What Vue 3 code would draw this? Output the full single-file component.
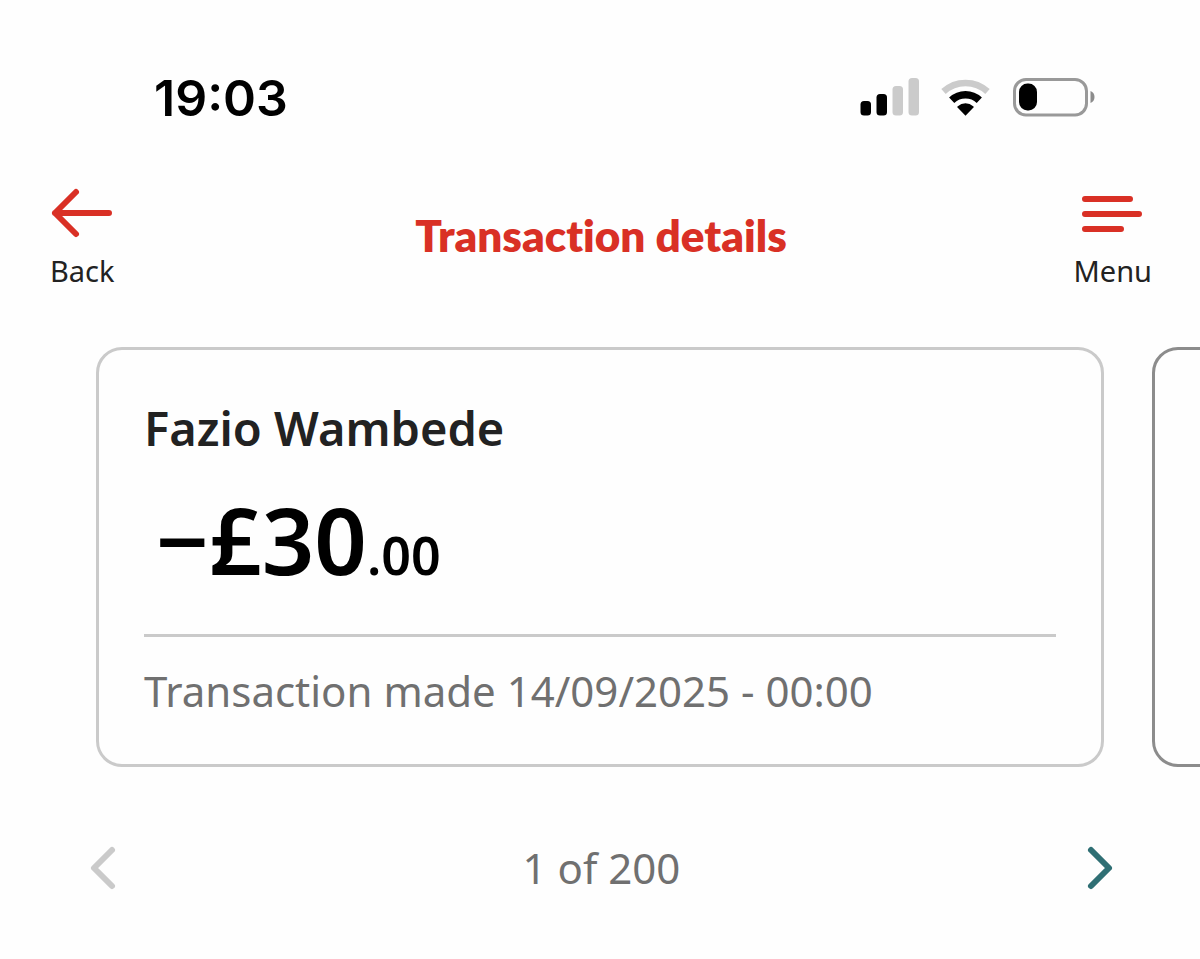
<script setup>
import { computed, ref } from 'vue'

const total = 200
const current = ref(1)

const transaction = {
  name: 'Fazio Wambede',
  pounds: '−£30',
  pence: '.00',
  made: '14/09/2025 - 00:00'
}

const isFirst = computed(() => current.value === 1)
const isLast = computed(() => current.value === total)
</script>

<template>
  <div class="screen">
    <div class="status-bar">
      <time class="clock">19:03</time>
      <svg class="status-icons" width="236" height="40" viewBox="860 78 236 40" aria-hidden="true">
        <!-- signal -->
        <rect x="860.500" y="101" width="10.500" height="14.500" rx="3.500" fill="#000" />
        <rect x="876.500" y="94" width="10.500" height="21.500" rx="3.500" fill="#000" />
        <rect x="892.500" y="86" width="10.500" height="29.500" rx="3.500" fill="#cbcbcb" />
        <rect x="908.500" y="78" width="10.500" height="37.500" rx="3.500" fill="#cbcbcb" />
        <!-- wifi -->
        <path d="M943.500 91.500A32.500 32.500 0 0 1 987.500 91.500" fill="none" stroke="#cbcbcb" stroke-width="6.500" />
        <path d="M951.700 100.200A20 20 0 0 1 979.300 100.200" fill="none" stroke="#000" stroke-width="7.500" />
        <path d="M965.500 114.300L958.500 107A10.500 10.500 0 0 1 972.500 107Z" fill="#000" stroke="#000" stroke-width="2" />
        <!-- battery -->
        <rect x="1014.500" y="79.500" width="72" height="35.500" rx="11.500" fill="none" stroke="#999" stroke-width="3" />
        <rect x="1019" y="83.500" width="18" height="27" rx="8.500" fill="#000" />
        <path d="M1090.500 91Q1094.500 92.500 1094.500 97T1090.500 103Z" fill="#8c8c8c" />
      </svg>
    </div>

    <header class="top-bar">
      <button type="button" class="nav-button">
        <svg width="64" height="52" viewBox="0 0 64 52" aria-hidden="true">
          <path d="M26 5L5 26L26 47M5 26H59" />
        </svg>
        <span>Back</span>
      </button>
      <h1 class="title">Transaction details</h1>
      <button type="button" class="nav-button">
        <svg width="64" height="52" viewBox="0 0 64 52" aria-hidden="true">
          <path d="M4 12H49M4 27H58M4 42H40" />
        </svg>
        <span>Menu</span>
      </button>
    </header>

    <main>
      <div class="carousel">
        <article class="card">
          <h2 class="payee">{{ transaction.name }}</h2>
          <p class="amount">{{ transaction.pounds }}<span class="pence">{{ transaction.pence }}</span></p>
          <p class="made">Transaction made {{ transaction.made }}</p>
        </article>
        <article class="card next" aria-hidden="true"></article>
      </div>

      <nav class="pager" aria-label="Transactions">
        <button type="button" class="step" aria-label="Previous" :disabled="isFirst" @click="current--">
          <svg width="36" height="48" viewBox="0 0 36 48" aria-hidden="true">
            <path d="M27 6L9 24L27 42" />
          </svg>
        </button>
        <span>{{ current }} of {{ total }}</span>
        <button type="button" class="step" aria-label="Next" :disabled="isLast" @click="current++">
          <svg width="36" height="48" viewBox="0 0 36 48" aria-hidden="true">
            <path d="M9 6L27 24L9 42" />
          </svg>
        </button>
      </nav>
    </main>
  </div>
</template>

<style>
body {
  background: #fefefe;
}
</style>

<style scoped>
.screen {
  padding-top: 68px;
  overflow: hidden;
  font-family: 'Noto Sans', sans-serif;
  color: #222;
}

.status-bar {
  display: flex;
  align-items: center;
  justify-content: space-between;
  padding: 0 104px 0 154px;
}

.clock {
  font-family: Inter, sans-serif;
  font-size: 50px;
  font-weight: 600;
  line-height: 60px;
  color: #000;
}

.top-bar {
  display: grid;
  grid-template-columns: 1fr auto 1fr;
  align-items: start;
  padding: 59px 48px 0 50px;
}

button {
  padding: 0;
  border: 0;
  background: none;
  font: inherit;
  color: inherit;
  cursor: pointer;
}

.nav-button {
  display: flex;
  flex-direction: column;
  align-items: center;
  justify-self: start;
  gap: 14px;
  font-size: 29px;
  line-height: 36px;
}

.nav-button:last-child {
  justify-self: end;
}

.nav-button path,
.step path {
  fill: none;
  stroke: #d93025;
  stroke-width: 6;
  stroke-linecap: round;
  stroke-linejoin: round;
}

.title {
  margin: 18px 0 0;
  font-family: Lato, 'Noto Sans', sans-serif;
  font-size: 44px;
  font-weight: 800;
  font-variant-ligatures: none;
  line-height: 60px;
  color: #d93025;
}

.carousel {
  display: flex;
  gap: 48px;
  padding: 58px 96px 0;
}

.card {
  flex: 0 0 100%;
  box-sizing: border-box;
  padding: 48px 45px 43px;
  border: 3px solid #cacaca;
  border-radius: 26px;
}

.next {
  border-color: #8c8c8c;
}

.payee {
  margin: 0;
  font-size: 47px;
  font-weight: 600;
  line-height: 60px;
}

.amount {
  margin: 27px 0 0;
  padding: 0 0 39px 12px;
  border-bottom: 3px solid #cacaca;
  font-size: 92px;
  font-weight: 600;
  line-height: 110px;
  color: #000;
}

.pence {
  font-size: 52px;
  line-height: 60px;
}

.made {
  margin: 24px 0 0;
  font-size: 42px;
  line-height: 60px;
  color: #707070;
}

.pager {
  display: flex;
  align-items: center;
  justify-content: space-between;
  padding: 71px 82px 60px 85px;
  font-size: 42px;
  line-height: 60px;
  color: #707070;
}

.step {
  display: flex;
}

.step path {
  stroke: #2f6f74;
}

.step:disabled path {
  stroke: #cacaca;
}
</style>
